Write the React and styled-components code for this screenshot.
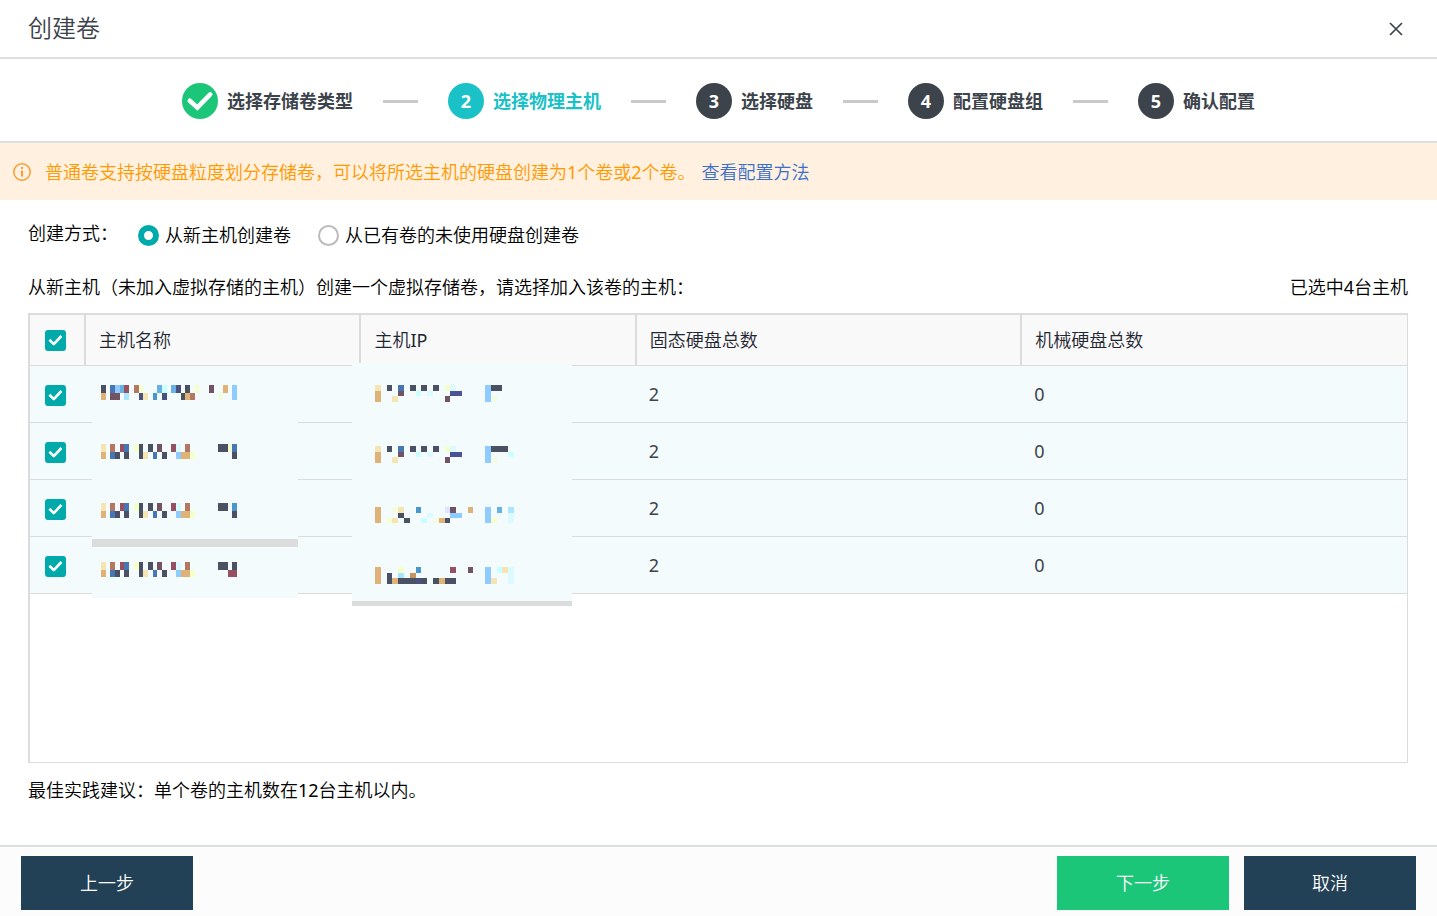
import React, { useState } from 'react';
import styled, { createGlobalStyle } from 'styled-components';

const GlobalStyle = createGlobalStyle`
  * {
    box-sizing: border-box;
  }

  body {
    margin: 0;
    background: white;
    color: #000;
    font-family: 'Noto Sans', 'Noto Sans CJK SC DemiLight', 'Noto Sans CJK SC', sans-serif;
    font-size: 18px;
    line-height: 24px;
  }
`;

const Dialog = styled.div`
  min-height: 100vh;
  display: flex;
  flex-direction: column;
`;

const Header = styled.header`
  height: 59px;
  display: flex;
  justify-content: space-between;
  align-items: center;
  padding: 0 32px 0 28px;
  border-bottom: 2px solid #dcdfe0;
`;

const Title = styled.h1`
  margin: 0;
  padding-bottom: 2px;
  font-size: 24px;
  line-height: 32px;
  font-weight: 400;
  color: #3c434b;
`;

const CloseButton = styled.button`
  display: flex;
  padding: 2px;
  border: 0;
  background: none;
  cursor: pointer;
`;

const Steps = styled.ol`
  height: 84px;
  margin: 0;
  padding: 2px 0 0;
  display: flex;
  justify-content: center;
  align-items: center;
  gap: 30px;
  list-style: none;
  border-bottom: 2px solid #dcdfe0;
`;

const Step = styled.li`
  display: flex;
  align-items: center;
  gap: 9px;
  font-family: 'Noto Sans', 'Noto Sans CJK SC', sans-serif;
  font-weight: 700;
  color: ${props => props.$active ? '#1ac1c7' : '#3c434b'};
`;

const StepBadge = styled.span`
  width: 36px;
  height: 36px;
  display: flex;
  justify-content: center;
  align-items: center;
  border-radius: 50%;
  color: white;
  background: ${props => props.$color};
`;

const StepLine = styled.li`
  width: 35px;
  height: 3px;
  background: #c9c9c9;
`;

const Notice = styled.div`
  height: 57px;
  display: flex;
  align-items: center;
  padding: 0 13px;
  color: #ff9900;
  background: #fff0df;
`;

const NoticeText = styled.span`
  margin: 0 6px 0 14px;
`;

const NoticeLink = styled.a`
  color: #3b6fc9;
  text-decoration: none;
`;

const Main = styled.main`
  flex: 1;
  display: flex;
  flex-direction: column;
  padding: 21px 29px 42px 28px;
`;

const Modes = styled.div`
  display: flex;
  align-items: flex-end;
`;

const ModesLabel = styled.span`
  margin-right: 20px;
  padding-bottom: 2px;
`;

const RadioLabel = styled.label`
  display: flex;
  align-items: center;
  gap: 6px;
  margin-right: 27px;
  cursor: pointer;
`;

const Radio = styled.input`
  appearance: none;
  width: 21px;
  height: 21px;
  margin: 0;
  border: 2px solid #bbb;
  border-radius: 50%;
  background: white;

  &:checked {
    border: 6px solid #00aaab;
  }
`;

const Intro = styled.div`
  display: flex;
  justify-content: space-between;
  margin: 28px 0 14px;
`;

const TableFrame = styled.div`
  flex: 1;
  border: 1px solid #dcdcdc;
  border-width: 2px 1px 1px 2px;
`;

const Table = styled.table`
  width: 100%;
  table-layout: fixed;
  border-collapse: separate;
  border-spacing: 0;
`;

const HeadCell = styled.th`
  width: ${props => props.$width};
  height: 51px;
  padding: 0 13px;
  text-align: left;
  font-weight: 400;
  color: #1f2733;
  background: #f9f9f9;
  border-bottom: 1px solid #dcdcdc;
  border-right: 2px solid #dcdcdc;

  &:last-child {
    border-right: 0;
  }
`;

const Cell = styled.td`
  position: relative;
  height: 57px;
  padding: 0 12px;
  color: #3c434b;
  background: #f3fbfd;
  border-bottom: 1px solid #dcdcdc;

  &:first-child {
    padding: 2px 13px 0;
  }
`;

const CheckWrap = styled.label`
  display: grid;
  width: 25px;
  justify-items: center;
  align-items: center;

  > * {
    grid-area: 1 / 1;
  }

  > svg {
    pointer-events: none;
  }
`;

const CheckInput = styled.input`
  appearance: none;
  width: 21px;
  height: 21px;
  margin: 0;
  border: 2px solid #bbb;
  border-radius: 3px;
  background: white;

  &:checked {
    border-color: #00aaab;
    background: #00aaab;
  }
`;

// Covers the private values of a whole column, over the row lines
const Mask = styled.div`
  position: absolute;
  z-index: 1;
  top: ${props => props.$top}px;
  left: ${props => props.$left}px;
  width: ${props => props.$width}px;
  height: ${props => props.$height}px;
  padding: ${props => props.$padding};
  display: flex;
  flex-direction: column;
  gap: 44px;
  background: #f3fbfd;
`;

const MaskBar = styled.div`
  position: absolute;
  left: 0;
  right: 0;
  top: ${props => props.$top}px;
  height: ${props => props.$height}px;
  background: #dcdcdc;
`;

const Tip = styled.p`
  margin: 15px 0 1px;
`;

const Footer = styled.footer`
  height: 71px;
  display: flex;
  align-items: center;
  gap: 15px;
  padding: 2px 21px 0;
  background: #fcfcfc;
  border-top: 2px solid #dcdfe0;
`;

const Button = styled.button`
  width: 172px;
  height: 54px;
  margin-right: ${props => props.$first ? 'auto' : '0'};
  border: 0;
  font: inherit;
  color: white;
  background: ${props => props.$primary ? '#1cc679' : '#224056'};
  cursor: pointer;
`;

const colors = {
  k: '#4a5162',
  t: '#dfb277',
  u: '#c8955f',
  b: '#4776b4',
  s: '#90cbff',
  c: '#69b0e5',
  d: '#4a97cb',
  m: '#955062',
  p: '#725364',
  i: '#aae6ff',
  r: '#b27861',
  y: '#f4ffcc',
  n: '#48527f',
  N: '#4b5296',
  w: '#f5e5b2',
  q: '#c9ffff',
  o: '#dcfbff',
  g: '#f3fce0',
  l: '#dce5ff',
};

const nameMosaics = [
  ['k.bscm.ry...cq.cn.k.y..p..t.s', 't.pp.i..nw.d.n...ktr.....g..s'],
  ['w.r.mb.yk.k.p..mo.r......kkyb', 't.bk.k..kw.b.k..stty........k'],
  ['w.r.mb.yk.k.p..mo.r......kk.d', 't.bk.k..kw.b.k..stty........k'],
  ['w.r.mb.yk.k.p..mo.r......kk.k', 't.bk.k..kw.b.k..stty.......mm'],
];

const ipMosaics = [
  ['w.k.b.k.k.k.yo.....skk..', 't...p..q.o...NN....s....', 't..w........p......sg...'],
  ['w.k.b.k.k.k.yo.....skkk.', 't...p..q.o...NN....s...q', 't..w........p......sg...'],
  ['t..gw..d....lp..t..s.c.i', 't...k....o...ss....s...o', 't.yw.k..q.gtk......sy..o'],
  ['t...y..d.....m..p..s.qwo', 't.k.i.u............s...o', 't.ktkkknk.ktkk.....sw..o'],
];

const steps = ['选择存储卷类型', '选择物理主机', '选择硬盘', '配置硬盘组', '确认配置'];

const hosts = [
  { ssd: 2, hdd: 0 },
  { ssd: 2, hdd: 0 },
  { ssd: 2, hdd: 0 },
  { ssd: 2, hdd: 0 },
];

const Mosaic = ({ rows, width, height }) => (
  <svg
    width={width}
    height={height}
    viewBox={`0 0 ${rows[0].length} ${rows.length}`}
    preserveAspectRatio="none"
    shapeRendering="crispEdges"
    aria-hidden="true"
  >
    {rows.map((row, y) => [...row].map((c, x) => (
      c !== '.' && <rect key={`${x}-${y}`} x={x} y={y} width="1" height="1" fill={colors[c]} />
    )))}
  </svg>
);

const Checkbox = ({ checked, onChange, label }) => (
  <CheckWrap>
    <CheckInput type="checkbox" checked={checked} onChange={onChange} aria-label={label} />
    <svg width="21" height="21" viewBox="0 0 21 21" fill="none">
      <path d="M4.4 9.8 8.8 14.1 16.4 6" stroke="white" strokeWidth="2.6" strokeLinejoin="round" />
    </svg>
  </CheckWrap>
);

const App = () => {
  const [mode, setMode] = useState('new');
  const [selected, setSelected] = useState(hosts.map(() => true));
  const count = selected.filter(Boolean).length;
  const all = count === hosts.length;

  const toggle = (index) => {
    setSelected(selected.map((value, i) => i === index ? !value : value));
  };

  return (
    <Dialog>
      <GlobalStyle />
      <Header>
        <Title>创建卷</Title>
        <CloseButton aria-label="关闭">
          <svg width="14" height="14" viewBox="0 0 14 14">
            <path d="M1 1 13 13M13 1 1 13" stroke="#3c434b" strokeWidth="1.7" />
          </svg>
        </CloseButton>
      </Header>
      <Steps>
        {steps.map((name, i) => (
          <React.Fragment key={name}>
            {i > 0 && <StepLine aria-hidden="true" />}
            <Step $active={i === 1}>
              <StepBadge $color={i === 0 ? '#1cc679' : i === 1 ? '#1ac1c7' : '#3c434b'}>
                {
                  i === 0 ?
                    <svg width="36" height="36" viewBox="0 0 36 36" fill="none">
                      <path d="M7.8 17.8 15.3 24.6 28.2 11.4" stroke="white" strokeWidth="4.6" strokeLinecap="round" />
                    </svg>
                  :
                    i + 1
                }
              </StepBadge>
              {name}
            </Step>
          </React.Fragment>
        ))}
      </Steps>
      <Notice>
        <svg width="18" height="18" viewBox="0 0 18 18" fill="none">
          <circle cx="9" cy="9" r="8.2" stroke="#ff9933" strokeWidth="1.5" />
          <path d="M9 4v2M9 7.4v6" stroke="#ff9933" strokeWidth="2" />
        </svg>
        <NoticeText>普通卷支持按硬盘粒度划分存储卷，可以将所选主机的硬盘创建为1个卷或2个卷。</NoticeText>
        <NoticeLink href="#">查看配置方法</NoticeLink>
      </Notice>
      <Main>
        <Modes role="radiogroup" aria-labelledby="mode-label">
          <ModesLabel id="mode-label">创建方式：</ModesLabel>
          <RadioLabel>
            <Radio type="radio" name="mode" checked={mode === 'new'} onChange={() => setMode('new')} />
            从新主机创建卷
          </RadioLabel>
          <RadioLabel>
            <Radio type="radio" name="mode" checked={mode === 'unused'} onChange={() => setMode('unused')} />
            从已有卷的未使用硬盘创建卷
          </RadioLabel>
        </Modes>
        <Intro>
          <span>从新主机（未加入虚拟存储的主机）创建一个虚拟存储卷，请选择加入该卷的主机：</span>
          <span>已选中{count}台主机</span>
        </Intro>
        <TableFrame>
          <Table>
            <thead>
              <tr>
                <HeadCell $width="56px">
                  <Checkbox checked={all} onChange={() => setSelected(hosts.map(() => !all))} label="全选" />
                </HeadCell>
                <HeadCell $width="20%">主机名称</HeadCell>
                <HeadCell $width="20%">主机IP</HeadCell>
                <HeadCell $width="28%">固态硬盘总数</HeadCell>
                <HeadCell>机械硬盘总数</HeadCell>
              </tr>
            </thead>
            <tbody>
              {hosts.map((host, i) => (
                <tr key={i}>
                  <Cell>
                    <Checkbox checked={selected[i]} onChange={() => toggle(i)} label={`主机${i + 1}`} />
                  </Cell>
                  <Cell>
                    {i === 0 && (
                      <Mask $top={6} $left={6} $width={206} $height={226} $padding="13px 9px">
                        {nameMosaics.map((rows, n) => <Mosaic key={n} rows={rows} width={136} height={15} />)}
                        <MaskBar $top={167} $height={8} />
                      </Mask>
                    )}
                  </Cell>
                  <Cell>
                    {i === 0 && (
                      <Mask $top={-3} $left={-9} $width={220} $height={243} $padding="22px 23px">
                        {ipMosaics.map((rows, n) => <Mosaic key={n} rows={rows} width={139} height={17} />)}
                        <MaskBar $top={238} $height={5} />
                      </Mask>
                    )}
                  </Cell>
                  <Cell>{host.ssd}</Cell>
                  <Cell>{host.hdd}</Cell>
                </tr>
              ))}
            </tbody>
          </Table>
        </TableFrame>
        <Tip>最佳实践建议：单个卷的主机数在12台主机以内。</Tip>
      </Main>
      <Footer>
        <Button $first>上一步</Button>
        <Button $primary>下一步</Button>
        <Button>取消</Button>
      </Footer>
    </Dialog>
  );
};

export default App;
